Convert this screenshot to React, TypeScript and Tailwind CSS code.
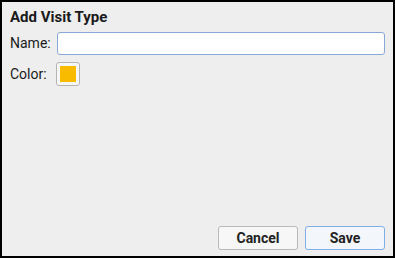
import { useState } from 'react';

export default function App() {
  const [name, setName] = useState('');
  const [color] = useState('#f9bb00');

  return (
    <div
      className="w-[395px] h-[258px] bg-[#eeeeee] border-2 border-black flex flex-col px-[8px] pt-[6px] pb-[6px] text-[#1a1a1a]"
      style={{ fontFamily: 'Roboto, "Liberation Sans", sans-serif' }}
    >
      {/* Title */}
      <h1 className="text-[15px] font-bold leading-[18px]">Add Visit Type</h1>

      {/* Name row */}
      <div className="flex items-center mt-[6px]">
        <label className="text-[14px] w-[47px] shrink-0">Name:</label>
        <input
          type="text"
          value={name}
          onChange={(e) => setName(e.target.value)}
          className="flex-1 h-[23px] bg-white border border-[#88a8d8] rounded-[3px] px-1 text-[13px] outline-none"
        />
      </div>

      {/* Color row */}
      <div className="flex items-center mt-[7px]">
        <label className="text-[14px] w-[46px] shrink-0">Color:</label>
        <button className="w-[24px] h-[24px] rounded-[3px] border border-[#b4b4b4] bg-[#f6f6f6] flex items-center justify-center">
          <span className="block w-[16px] h-[16px]" style={{ backgroundColor: color }} />
        </button>
      </div>

      <div className="flex-1" />

      {/* Buttons */}
      <div className="flex justify-end gap-[7px]">
        <button className="w-[80px] h-[24px] rounded-[3px] border border-[#b9b9b9] bg-[#f7f7f7] text-[14px] font-bold text-[#222]">
          Cancel
        </button>
        <button className="w-[80px] h-[24px] rounded-[3px] border border-[#7faee8] bg-[#f3f6fb] text-[14px] font-bold text-[#222]">
          Save
        </button>
      </div>
    </div>
  );
}
